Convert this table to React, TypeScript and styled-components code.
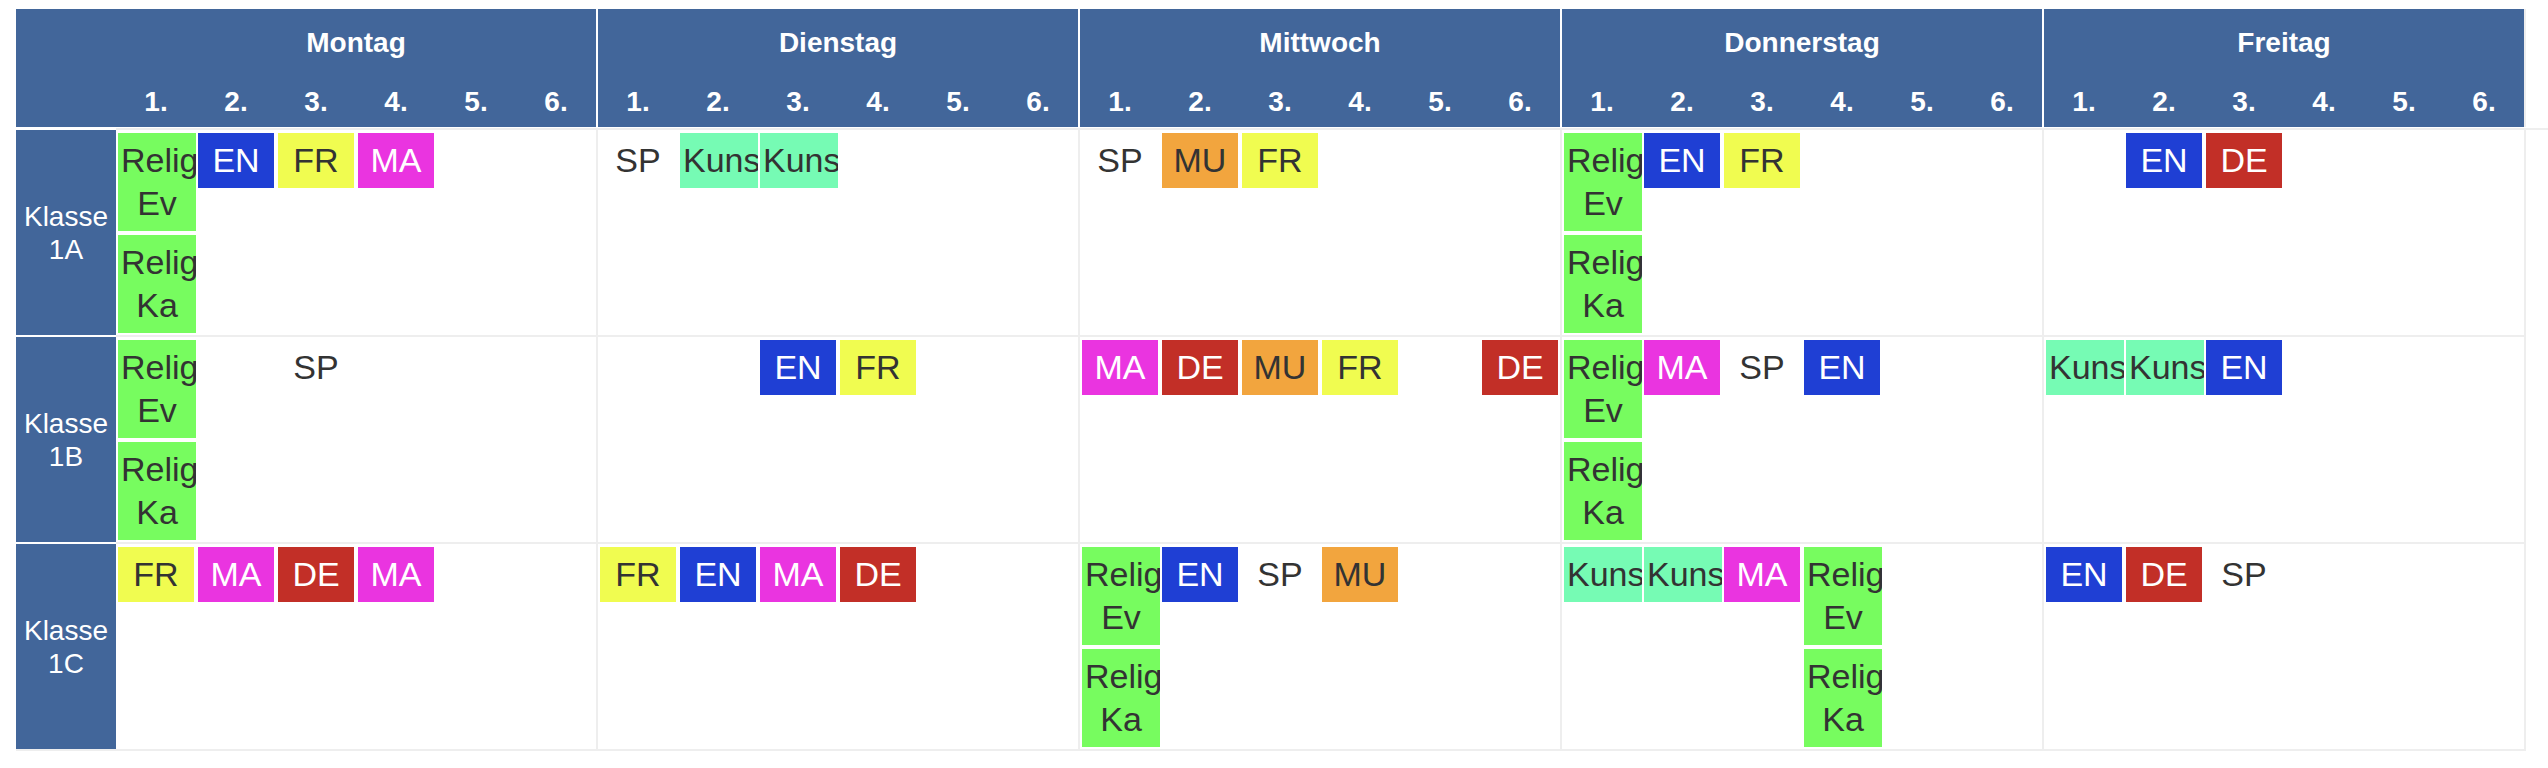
import React from 'react';
import styled, { createGlobalStyle } from 'styled-components';

const GlobalStyle = createGlobalStyle`
  html, body {
    margin: 0;
    padding: 0;
    background: #fff;
  }
  body {
    font-family: 'Liberation Sans', Arial, Helvetica, sans-serif;
    color: #333;
  }
`;

type Subject = {
  label: string;
  bg: string;
  fg: string;
  wide?: boolean;
};

const subjects: Record<string, Subject> = {
  RE: { label: 'Religion Ev', bg: '#77fc5f', fg: '#333', wide: true },
  RK: { label: 'Religion Ka', bg: '#77fc5f', fg: '#333', wide: true },
  KU: { label: 'Kunst', bg: '#76fbb4', fg: '#333', wide: true },
  EN: { label: 'EN', bg: '#1f3fd4', fg: '#fff' },
  FR: { label: 'FR', bg: '#f0fc50', fg: '#333' },
  MA: { label: 'MA', bg: '#ea34e0', fg: '#fff' },
  DE: { label: 'DE', bg: '#c22f27', fg: '#fff' },
  MU: { label: 'MU', bg: '#f2a53e', fg: '#333' },
  SP: { label: 'SP', bg: 'transparent', fg: '#333' },
};

const days = ['Montag', 'Dienstag', 'Mittwoch', 'Donnerstag', 'Freitag'];
const periods = [1, 2, 3, 4, 5, 6];

type Week = string[][][];

const R = ['RE', 'RK'];

const schedule: { name: string; week: Week }[] = [
  {
    name: '1A',
    week: [
      [R, ['EN'], ['FR'], ['MA'], [], []],
      [['SP'], ['KU'], ['KU'], [], [], []],
      [['SP'], ['MU'], ['FR'], [], [], []],
      [R, ['EN'], ['FR'], [], [], []],
      [[], ['EN'], ['DE'], [], [], []],
    ],
  },
  {
    name: '1B',
    week: [
      [R, [], ['SP'], [], [], []],
      [[], [], ['EN'], ['FR'], [], []],
      [['MA'], ['DE'], ['MU'], ['FR'], [], ['DE']],
      [R, ['MA'], ['SP'], ['EN'], [], []],
      [['KU'], ['KU'], ['EN'], [], [], []],
    ],
  },
  {
    name: '1C',
    week: [
      [['FR'], ['MA'], ['DE'], ['MA'], [], []],
      [['FR'], ['EN'], ['MA'], ['DE'], [], []],
      [R, ['EN'], ['SP'], ['MU'], [], []],
      [['KU'], ['KU'], ['MA'], R, [], []],
      [['EN'], ['DE'], ['SP'], [], [], []],
    ],
  },
];

const App = () => {
  return (
    <>
      <GlobalStyle />
      <Page>
        <HeaderRow>
          <Corner />
          {days.map((day, i) => (
            <DayHead key={day} $last={i === days.length - 1}>
              <DayName>{day}</DayName>
              <PeriodRow>
                {periods.map((p) => (
                  <PeriodNo key={p}>{p}.</PeriodNo>
                ))}
              </PeriodRow>
            </DayHead>
          ))}
        </HeaderRow>
        <HeaderLine />
        {schedule.map((klasse, r) => {
          const last = r === schedule.length - 1;
          return (
            <ClassRow key={klasse.name}>
              <ClassCell $last={last}>
                Klasse
                <br />
                {klasse.name}
              </ClassCell>
              {klasse.week.map((day, d) => (
                <DayCell key={d}>
                  {day.map((lessons, p) => (
                    <Slot key={p}>
                      {lessons.map((code, k) => {
                        const s = subjects[code];
                        return (
                          <Lesson key={k} $bg={s.bg} $fg={s.fg} $wide={s.wide}>
                            {s.label}
                          </Lesson>
                        );
                      })}
                    </Slot>
                  ))}
                </DayCell>
              ))}
            </ClassRow>
          );
        })}
      </Page>
    </>
  );
};

export default App;

const blue = '#42669a';
const line = '#eeeeee';

const Page = styled.div`
  padding: 9px 0 0 16px;
`;

const HeaderRow = styled.div`
  display: flex;
`;

const Corner = styled.div`
  width: 100px;
  height: 118px;
  background: ${blue};
`;

const DayHead = styled.div<{ $last?: boolean }>`
  width: 480px;
  background: ${blue};
  border-right: 2px solid ${({ $last }) => ($last ? line : '#fff')};
  color: #fff;
  font-weight: bold;
  font-size: 28px;
`;

const DayName = styled.div`
  height: 59px;
  box-sizing: border-box;
  padding-top: 17px;
  line-height: 34px;
  text-align: center;
`;

const PeriodRow = styled.div`
  display: grid;
  grid-template-columns: repeat(6, 80px);
  height: 59px;
  box-sizing: border-box;
  padding-top: 17px;
  line-height: 34px;
`;

const PeriodNo = styled.div`
  text-align: center;
`;

const HeaderLine = styled.div`
  height: 2px;
  margin: 1px 0 0 100px;
  background: ${line};
`;

const ClassRow = styled.div`
  display: flex;
`;

const ClassCell = styled.div<{ $last?: boolean }>`
  width: 100px;
  display: flex;
  align-items: center;
  justify-content: center;
  text-align: center;
  background: ${blue};
  color: #fff;
  font-size: 28px;
  line-height: 33px;
  border-bottom: 2px solid ${({ $last }) => ($last ? line : '#fff')};
`;

const DayCell = styled.div`
  width: 480px;
  display: grid;
  grid-template-columns: repeat(6, 80px);
  align-items: start;
  padding-top: 1px;
  border-right: 2px solid ${line};
  border-bottom: 2px solid ${line};
`;

const Slot = styled.div`
  display: flex;
  flex-direction: column;
  min-height: 204px;
`;

const Lesson = styled.div<{ $bg: string; $fg: string; $wide?: boolean }>`
  width: ${({ $wide }) => ($wide ? '78px' : '76px')};
  margin: 2px ${({ $wide }) => ($wide ? '0' : '2px')} 2px 2px;
  box-sizing: border-box;
  padding: 6px 3px;
  background: ${({ $bg }) => $bg};
  color: ${({ $fg }) => $fg};
  font-size: 34px;
  line-height: 43px;
  text-align: center;
  overflow: hidden;
`;
